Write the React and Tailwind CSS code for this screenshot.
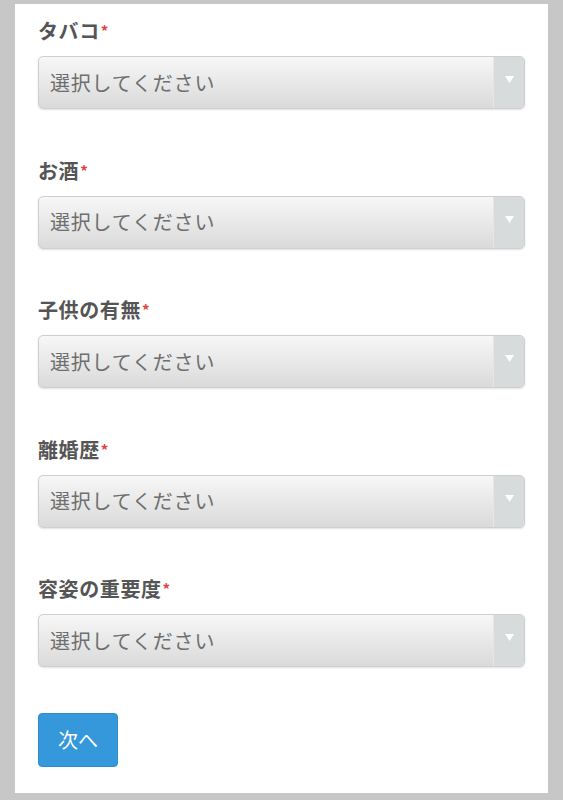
import React from "react";

const fields = ["タバコ", "お酒", "子供の有無", "離婚歴", "容姿の重要度"];

function Select() {
  return (
    <div className="relative flex h-[53px] w-full rounded-[5px] border border-[#cfcfcf] bg-gradient-to-b from-[#f7f7f7] to-[#dadada] shadow-[0_1px_2px_rgba(0,0,0,0.12)] overflow-hidden">
      <div className="flex flex-1 items-center pl-[11px] text-[20px] text-[#6e6e6e] tracking-[0.8px]">
        選択してください
      </div>
      <div className="flex w-[31px] items-center justify-center border-l border-[#e6e6e6] bg-[#d8dbdc]">
        <svg width="9" height="7" viewBox="0 0 9 7" className="-mt-[6px]">
          <polygon points="0,0 9,0 4.5,7" fill="#ffffff" />
        </svg>
      </div>
    </div>
  );
}

export default function App() {
  return (
    <div
      className="min-h-[800px] w-full bg-[#c7c7c7] pt-[4px] pb-[7px]"
      style={{ fontFamily: '"Noto Sans CJK JP", "Noto Sans", sans-serif' }}
    >
      <div className="mx-[15px] bg-white px-[23px] pt-[13px] pb-[26px]">
        {fields.map((f, i) => (
          <div key={f} className={i < fields.length - 1 ? "mb-[47.5px]" : "mb-[46px]"}>
            <div className="mb-[11px] h-[28px] text-[20px] font-bold leading-[28px] tracking-[0.6px] text-[#555555]">
              {f}
              <span className="ml-[1px] align-top text-[15px] text-[#e0423c]">*</span>
            </div>
            <Select />
          </div>
        ))}
        <button className="flex h-[54px] w-[80px] items-center justify-center rounded-[4px] border border-[#2c8dcf] bg-[#3498db] text-[20px] text-white">
          次へ
        </button>
      </div>
    </div>
  );
}
